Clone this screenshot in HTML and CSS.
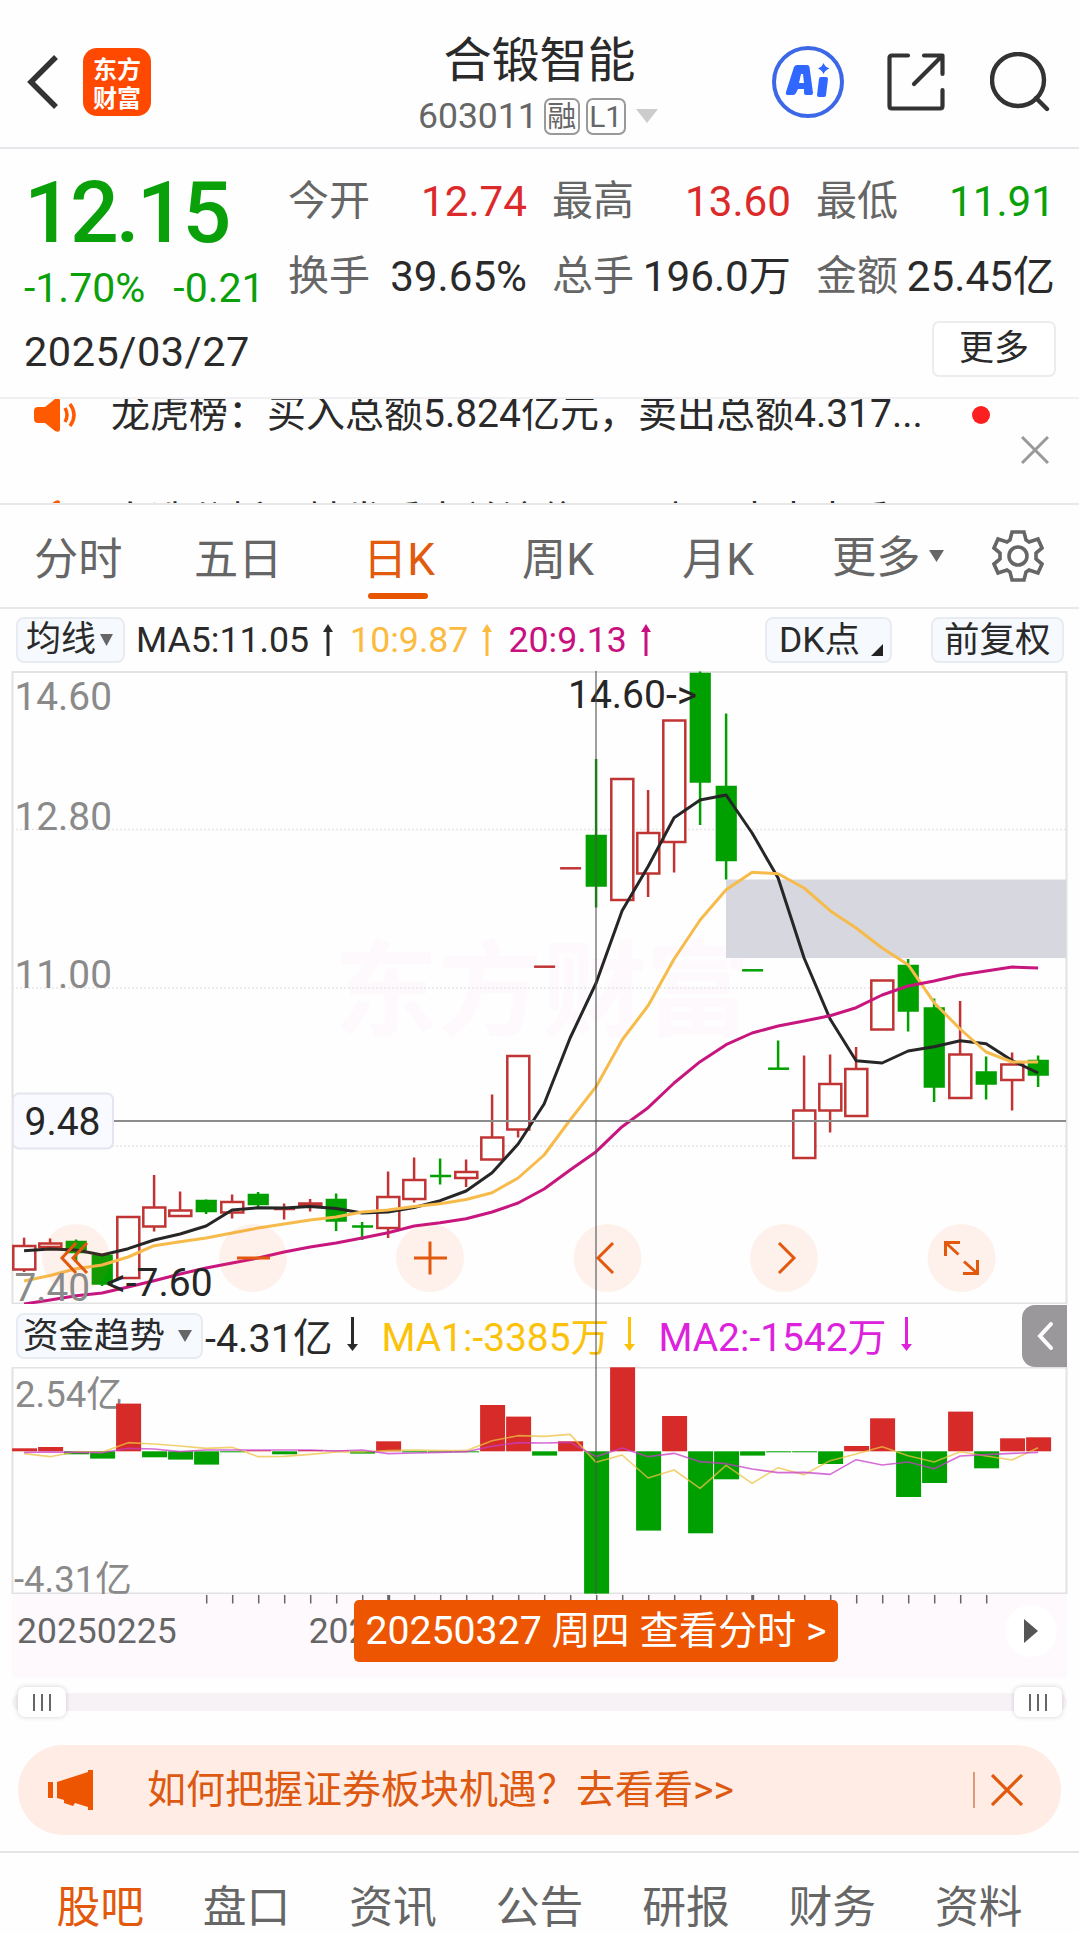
FILE: index.html
```html
<!DOCTYPE html>
<html lang="zh-CN">
<head>
    <meta charset="UTF-8">
    <meta name="viewport" content="width=device-width, initial-scale=1.0">
    <title>合锻智能 603011</title>
    <link rel="stylesheet" href="styles.css">
</head>
<body>
    <header class="header">
        <div class="header-left">
            <svg class="back" width="34" height="56" viewBox="0 0 34 56"><path d="M30 3 L5 28 L30 53" fill="none" stroke="#333" stroke-width="5.5"/></svg>
            <div class="logo"><span>东方</span><span>财富</span></div>
        </div>
        <div class="header-title">
            <h1>合锻智能</h1>
            <div class="code">
                <span>603011</span>
                <span class="tag tag-rong">融</span>
                <span class="tag">L1</span>
                <svg width="22" height="14" viewBox="0 0 22 14"><path d="M0 0H22L11 14Z" fill="#ccc"/></svg>
            </div>
        </div>
        <div class="header-right">
            <svg width="72" height="72" viewBox="0 0 72 72">
                <circle cx="36" cy="36" r="34" fill="none" stroke="#3c68e8" stroke-width="4"/>
                <path fill="#2f67ff" fill-rule="evenodd" d="M25 19H35Q37 19 37.500 21L41 47Q41 49 39 49H34Q32 49 32 47V43H26L24 47Q23 49 21 49H16Q13 49 14 46L22 21Q23 19 25 19ZM29 28L27 37H32L31 28ZM49 31H54Q56 31 56 33L54 49Q54 51 52 51H47Q45 51 45 49L47 33Q47 31 49 31ZM51.500 17Q53 21 57.500 22.500Q53 24 51.500 28Q50 24 46 22.500Q50 21 51.500 17Z"/>
            </svg>
            <svg width="58" height="58" viewBox="0 0 58 58" fill="none" stroke="#333" stroke-width="4.200" stroke-linecap="round" stroke-linejoin="round">
                <path d="M21 2.500H5Q2.500 2.500 2.500 5V53Q2.500 55.500 5 55.500H53Q55.500 55.500 55.500 53V37M37 2.500H55.500V21M54 4L27 31"/>
            </svg>
            <svg width="60" height="60" viewBox="0 0 60 60" fill="none" stroke="#333" stroke-width="4.400" stroke-linecap="round">
                <circle cx="28" cy="28" r="26"/><path d="M46 46L57 57"/>
            </svg>
        </div>
    </header>

    <section class="quote">
        <div class="quote-top">
            <div class="quote-price">
                <div class="price">12.15</div>
                <div class="change"><span>-1.70%</span><span>-0.21</span></div>
            </div>
            <div class="quote-grid">
                <div class="cell"><span class="label">今开</span><span class="red">12.74</span></div>
                <div class="cell"><span class="label">最高</span><span class="red">13.60</span></div>
                <div class="cell"><span class="label">最低</span><span class="green">11.91</span></div>
                <div class="cell"><span class="label">换手</span><span>39.65%</span></div>
                <div class="cell"><span class="label">总手</span><span>196.0万</span></div>
                <div class="cell"><span class="label">金额</span><span>25.45亿</span></div>
            </div>
        </div>
        <div class="quote-bottom">
            <span class="date">2025/03/27</span>
            <button class="more">更多</button>
        </div>
    </section>

    <section class="news">
        <div class="news-list">
            <div class="news-row">
                <svg width="44" height="34" viewBox="0 0 44 34"><path fill="#ff5a00" d="M0 13Q0 9 4 9H11L21 1Q26-1 26 3V31Q26 35 21 33L11 25H4Q0 25 0 21Z"/><path d="M31 10Q35 17 31 24M36 6Q44 17 36 28" fill="none" stroke="#ff5a00" stroke-width="3.500"/></svg>
                <span class="news-text">龙虎榜：买入总额5.824亿元，卖出总额4.317...</span>
                <i class="dot"></i>
            </div>
            <div class="news-row">
                <svg width="44" height="34" viewBox="0 0 44 34"><path fill="#ff5a00" d="M0 13Q0 9 4 9H11L21 1Q26-1 26 3V31Q26 35 21 33L11 25H4Q0 25 0 21Z"/></svg>
                <span class="news-text">自选分析：触发看大关注信号，立即去去去看</span>
            </div>
        </div>
        <svg class="news-close" width="28" height="28" viewBox="0 0 28 28"><path d="M1 1L27 27M27 1L1 27" stroke="#999" stroke-width="3"/></svg>
    </section>

    <nav class="tabs">
        <span>分时</span>
        <span>五日</span>
        <span class="active">日K</span>
        <span>周K</span>
        <span>月K</span>
        <span class="tab-more">更多<svg width="15" height="12" viewBox="0 0 15 12"><path d="M0 0H15L7.500 12Z" fill="#666"/></svg></span>
        <svg class="gear" width="52" height="52" viewBox="-26 -26 52 52" fill="none" stroke="#666" stroke-width="3.600">
            <path d="M-6-24H6L8-16L11-14L20-17L24-8L18-3V3L24 8L20 17L11 14L8 16L6 24H-6L-8 16L-11 14L-20 17L-24 8L-18 3V-3L-24-8L-20-17L-11-14L-8-16Z"/>
            <circle r="9"/>
        </svg>
    </nav>

    <div class="ma-bar">
        <button class="chip chip-ma">均线<svg width="13" height="12" viewBox="0 0 13 12"><path d="M0 0H13L6.500 12Z" fill="#666"/></svg></button>
        <span class="ma ma5">MA5:11.05<svg width="10" height="32" viewBox="0 0 10 32"><path d="M5 5V32" stroke="currentColor" stroke-width="3"/><path d="M5 0L10 8H0Z" fill="currentColor"/></svg></span>
        <span class="ma ma10">10:9.87<svg width="10" height="32" viewBox="0 0 10 32"><path d="M5 5V32" stroke="currentColor" stroke-width="3"/><path d="M5 0L10 8H0Z" fill="currentColor"/></svg></span>
        <span class="ma ma20">20:9.13<svg width="10" height="32" viewBox="0 0 10 32"><path d="M5 5V32" stroke="currentColor" stroke-width="3"/><path d="M5 0L10 8H0Z" fill="currentColor"/></svg></span>
        <button class="chip chip-dk">DK点<svg width="12" height="12" viewBox="0 0 12 12"><path d="M12 0V12H0Z" fill="#222"/></svg></button>
        <button class="chip chip-fq">前复权</button>
    </div>

    <div class="charts">
        <svg class="chart" id="kline" width="1079" height="633" viewBox="0 671 1079 633">
            <text class="watermark" x="334" y="1028">东方财富</text>
            <g class="grid">
                <path d="M12 829.500H1067M12 988H1067M12 1146H1067"/>
            </g>
            <rect class="frame" x="12.500" y="672" width="1054" height="631.500"/>
            <rect x="726" y="879.500" width="340" height="78.500" fill="#d6d7df"/>
            <g id="candles"></g>
            <g id="averages"></g>
            <g class="controls">
                <circle cx="76" cy="1258" r="34"/>
                <circle cx="253" cy="1258" r="34"/>
                <circle cx="430" cy="1258" r="34"/>
                <circle cx="607.500" cy="1258" r="34"/>
                <circle cx="784" cy="1258" r="34"/>
                <circle cx="961.500" cy="1258" r="34"/>
                <path d="M76 1243L62 1258L76 1273M87 1243L73 1258L87 1273M237 1258H270M414 1258H447M430 1241.500V1274.500M613 1243L598 1258L613 1273M779 1243L794 1258L779 1273"/>
                <path d="M958.500 1254.500L946 1243M945.500 1256V1242.500H960M964 1261.500L977 1273M977.500 1260V1273.500H963"/>
            </g>
            <path class="cross" d="M113 1121H1066"/>
            <g class="axis-text">
                <text x="14.500" y="709.500">14.60</text>
                <text x="14.500" y="829.500">12.80</text>
                <text x="14.500" y="987.500">11.00</text>
                <text x="14.500" y="1301">7.40</text>
            </g>
            <g class="mark-text">
                <text x="568" y="707.500">14.60-&gt;</text>
                <text x="106" y="1295.500">&lt;-7.60</text>
            </g>
            <rect class="price-tag" x="13" y="1093.500" width="100" height="55" rx="6"/>
            <text class="mark-text" x="24.500" y="1134.500">9.48</text>
        </svg>

        <div class="fund-bar">
            <button class="chip chip-fund">资金趋势<svg width="14" height="12" viewBox="0 0 14 12"><path d="M0 0H14L7 12Z" fill="#666"/></svg></button>
            <span class="fund fund-val">-4.31亿<svg width="11" height="34" viewBox="0 0 11 34"><path d="M5.500 0V30" stroke="currentColor" stroke-width="3"/><path d="M5.500 34L11 27H0Z" fill="currentColor"/></svg></span>
            <span class="fund fund-ma1">MA1:-3385万<svg width="11" height="34" viewBox="0 0 11 34"><path d="M5.500 0V30" stroke="currentColor" stroke-width="3"/><path d="M5.500 34L11 27H0Z" fill="currentColor"/></svg></span>
            <span class="fund fund-ma2">MA2:-1542万<svg width="11" height="34" viewBox="0 0 11 34"><path d="M5.500 0V30" stroke="currentColor" stroke-width="3"/><path d="M5.500 34L11 27H0Z" fill="currentColor"/></svg></span>
            <span class="side-tab"><svg width="18" height="30" viewBox="0 0 18 30"><path d="M15 3L4 15L15 27" fill="none" stroke="#fff" stroke-width="4" stroke-linecap="round"/></svg></span>
        </div>

        <svg class="chart" id="fund" width="1079" height="227" viewBox="0 1367 1079 227">
            <rect class="frame" x="12.500" y="1367.500" width="1054" height="226"/>
            <g class="axis-text">
                <text x="15" y="1407">2.54亿</text>
                <text x="14" y="1592">-4.31亿</text>
            </g>
            <g id="bars"></g>
            <g id="fundLines"></g>
        </svg>
        <div class="cross-v"></div>
    </div>

    <div class="time-axis">
        <svg class="ticks" id="ticks" width="1055" height="11" viewBox="12 0 1055 11"></svg>
        <div class="dates">
            <span class="date-start">20250225</span>
            <span class="date-mid">20250317</span>
            <span class="play"><svg width="14" height="24" viewBox="0 0 14 24"><path d="M0 0L14 12L0 24Z" fill="#555"/></svg></span>
        </div>
        <div class="tooltip">20250327 周四 查看分时 &gt;</div>
    </div>

    <div class="slider">
        <div class="handle"><i></i><i></i><i></i></div>
        <div class="handle"><i></i><i></i><i></i></div>
    </div>

    <div class="banner">
        <svg width="46" height="40" viewBox="0 0 46 40"><path fill="#ee5500" d="M0 12H5V28H0ZM9 12L40 2V0H45V40H40V37L27 33L25 36L16 33V30L9 28Z"/></svg>
        <span class="banner-text">如何把握证券板块机遇？去看看&gt;&gt;</span>
        <i class="divider"></i>
        <svg class="banner-close" width="32" height="32" viewBox="0 0 32 32"><path d="M1 1L31 31M31 1L1 31" stroke="#e2580c" stroke-width="3.200"/></svg>
    </div>

    <nav class="bottom-tabs">
        <span class="active">股吧</span>
        <span>盘口</span>
        <span>资讯</span>
        <span>公告</span>
        <span>研报</span>
        <span>财务</span>
        <span>资料</span>
    </nav>

    <script src="chart.js"></script>
</body>
</html>
```

FILE: styles.css
```css
* {
    box-sizing: border-box;
}
body {
    margin: 0;
    width: 1079px;
    height: 1933px;
    overflow: hidden;
    background: #fefefe;
    color: #2a2a2a;
    font-family: Roboto, "Noto Sans CJK SC", sans-serif;
}
svg {
    display: block;
    flex: none;
}
button {
    font-family: inherit;
    color: inherit;
    padding: 0;
    margin: 0;
}
.red {
    color: #dc2a2a;
}
.green {
    color: #0aa00a;
}

/* header */
.header {
    height: 149px;
    border-bottom: 2px solid #e6e6ea;
    display: grid;
    grid-template-columns: 340px 1fr 340px;
}
.header-left {
    display: flex;
    align-items: center;
    padding: 17px 0 0 26px;
}
.logo {
    width: 68px;
    height: 68px;
    margin-left: 23px;
    border-radius: 14px;
    background: #ff4800;
    color: #fff;
    font-family: "Noto Sans CJK SC", sans-serif;
    font-weight: 700;
    font-size: 24px;
    line-height: 29px;
    display: flex;
    flex-direction: column;
    align-items: center;
    justify-content: center;
}
.header-title {
    padding-top: 31px;
}
.header-title h1 {
    margin: 0;
    font-size: 48px;
    line-height: 60px;
    font-weight: 400;
    text-align: center;
}
.code {
    display: flex;
    align-items: center;
    height: 50px;
    padding-left: 78px;
    font-size: 35.500px;
    color: #666;
}
.tag {
    border: 2px solid #999;
    border-radius: 7px;
    height: 37px;
    width: 40px;
    margin-left: 6px;
    font-size: 30px;
    line-height: 34px;
    text-align: center;
}
.tag-rong {
    width: 36px;
    margin-left: 6px;
    font-size: 29px;
}
.code svg {
    margin-left: 10px;
}
.header-right {
    display: flex;
    align-items: center;
    padding: 17px 0 0 33px;
}
.header-right svg + svg {
    margin-left: 43px;
}
.header-right svg:last-child {
    margin-left: 45px;
}

/* quote */
.quote {
    height: 250px;
    border-bottom: 2px solid #f0f0f2;
}
.quote-top {
    display: flex;
    height: 165px;
}
.quote-price {
    width: 288px;
    padding-left: 24px;
    color: #0aa00a;
}
.price {
    margin-top: 19px;
    font-size: 86px;
    line-height: 90px;
    font-weight: 500;
    letter-spacing: -3px;
}
.change {
    display: flex;
    gap: 28px;
    margin-top: 6px;
    font-size: 41px;
    line-height: 48px;
}
.quote-grid {
    display: grid;
    grid-template-columns: 239px 239px 239px;
    grid-template-rows: 75px 75px;
    column-gap: 25px;
    padding-top: 15px;
}
.cell {
    display: flex;
    justify-content: space-between;
    font-size: 42.200px;
    line-height: 75px;
    white-space: nowrap;
}
.cell .label {
    font-size: 41px;
    color: #666;
}
.quote-bottom {
    display: flex;
    justify-content: space-between;
    align-items: center;
    height: 70px;
    padding: 0 23px 0 24px;
}
.date {
    font-size: 41.500px;
    letter-spacing: 0.5px;
    padding-top: 4px;
}
.more {
    width: 124px;
    height: 56px;
    border: 2px solid #ececee;
    border-radius: 7px;
    background: #fff;
    font-size: 35px;
    line-height: 52px;
}

/* news */
.news {
    position: relative;
    height: 106px;
    overflow: hidden;
    border-bottom: 2px solid #e8e8e8;
}
.news-list {
    margin-top: -37px;
}
.news-row {
    display: flex;
    align-items: center;
    height: 105px;
    padding-left: 34px;
    font-size: 39px;
    line-height: 105px;
}
.news-row + .news-row {
    margin-top: 2px;
}
.news-row + .news-row svg {
    margin-bottom: 10px;
}
.news-text {
    margin-left: 33px;
    width: 861px;
    white-space: nowrap;
}
.dot {
    width: 18px;
    height: 18px;
    border-radius: 50%;
    background: #fb1f1f;
}
.news-close {
    position: absolute;
    right: 30px;
    top: 37px;
}

/* period tabs */
.tabs {
    display: flex;
    align-items: center;
    height: 104px;
    border-bottom: 2px solid #e8e8e8;
    padding-left: 34px;
    font-size: 44.200px;
    line-height: 102px;
    color: #666;
    white-space: nowrap;
}
.tabs span {
    width: 160px;
    padding-top: 4px;
    height: 102px;
}
.tabs .active {
    position: relative;
    width: 168px;
    padding-left: 9px;
    color: #e25a0c;
}
.tabs .active::after {
    content: "";
    position: absolute;
    left: 14px;
    bottom: 8px;
    width: 60px;
    height: 6px;
    border-radius: 3px;
    background: #e85500;
}
.tabs .tab-more {
    display: flex;
    align-items: center;
    width: 160px;
    margin-left: -10px;
}
.tab-more svg {
    margin-left: 9px;
    margin-bottom: 4px;
}

/* moving average bar */
.ma-bar {
    display: flex;
    align-items: center;
    height: 62px;
    padding: 0 15px 0 16px;
    font-size: 35.700px;
    white-space: nowrap;
}
.chip {
    display: flex;
    align-items: center;
    height: 46px;
    border: 2px solid #e9ebf3;
    border-radius: 8px;
    background: #f6f9fe;
    font-size: 35px;
    line-height: 44px;
}
.chip-ma {
    width: 109px;
    padding-left: 8px;
}
.chip-ma svg {
    margin-left: 4px;
}
.chip-dk {
    width: 127px;
    margin-left: auto;
    padding-left: 12px;
    font-size: 35.500px;
}
.chip-dk svg {
    margin: 20px 0 0 11px;
}
.chip-fq {
    width: 133px;
    margin-left: 39px;
    padding-left: 11px;
    font-size: 35.500px;
}
.ma {
    display: flex;
    align-items: center;
}
.ma svg {
    margin-left: 14px;
}
.ma5 {
    margin-left: 11px;
}
.ma10 {
    margin-left: 17px;
    color: #fabb40;
}
.ma20 {
    margin-left: 16px;
    color: #c8107f;
}

/* charts */
.charts {
    position: relative;
}
.frame {
    fill: none;
    stroke: #e2e2e2;
    stroke-width: 2;
}
.grid path {
    stroke: #e6e6e6;
    stroke-width: 1.5;
    stroke-dasharray: 2 2;
}
.watermark {
    font-family: "Noto Sans CJK SC", sans-serif;
    font-size: 104px;
    font-weight: 700;
    fill: #fdf9fd;
}
.axis-text {
    font-size: 38.800px;
    fill: #8a8a8a;
}
#fund .axis-text {
    font-size: 36.500px;
}
.mark-text {
    font-size: 39px;
    fill: #262626;
}
.price-tag {
    fill: #f8faff;
    stroke: #e4e5ee;
    stroke-width: 2;
}
.cross {
    stroke: #8c8c8c;
    stroke-width: 2;
}
.cross-v {
    position: absolute;
    left: 595px;
    top: 0;
    width: 2px;
    height: 923px;
    background: rgba(80, 80, 80, 0.55);
}
.controls circle {
    fill: rgba(255, 90, 20, 0.08);
}
.controls path {
    fill: none;
    stroke: #e2580c;
    stroke-width: 3;
}
.up {
    fill: #fff;
    stroke: #c03434;
    stroke-width: 2.5;
}
.down {
    fill: #00a000;
    stroke: #00a000;
    stroke-width: 2.5;
}
.bar-up {
    fill: #d62b28;
}
.bar-down {
    fill: #00a000;
}
.line {
    fill: none;
    stroke-width: 3;
    stroke-linejoin: round;
}
.line.thin {
    stroke-width: 1.6;
    opacity: 0.75;
}

/* fund bar */
.fund-bar {
    display: flex;
    align-items: center;
    height: 63px;
    padding-left: 16px;
    font-size: 38.900px;
    white-space: nowrap;
}
.chip-fund {
    width: 187px;
    padding-left: 5px;
    font-size: 35.500px;
}
.chip-fund svg {
    margin-left: 13px;
}
.fund {
    display: flex;
    align-items: center;
    padding-bottom: 3px;
}
.fund svg {
    margin-left: 15px;
}
.fund-val {
    margin-left: 2px;
    font-size: 39.500px;
}
.fund-ma1 {
    margin-left: 23px;
    color: #fbc20c;
}
.fund-ma2 {
    margin-left: 23px;
    color: #dc22dc;
}
.side-tab {
    display: flex;
    align-items: center;
    justify-content: center;
    width: 45px;
    height: 62px;
    margin: 0 12px 0 auto;
    border-radius: 13px 0 0 13px;
    background: #9b989b;
}

/* time axis */
.time-axis {
    position: relative;
    height: 84px;
    margin: 0 12px;
    background: #fdf9fd;
}
.dates {
    display: flex;
    align-items: center;
    height: 52px;
    padding-left: 5px;
    font-size: 35.500px;
    line-height: 48px;
    color: #666;
}
.date-mid {
    margin-left: 132px;
}
.play {
    display: flex;
    align-items: center;
    justify-content: center;
    width: 52px;
    height: 52px;
    margin-left: auto;
    margin-right: 10px;
    border-radius: 50%;
    background: #fff;
}
.tooltip {
    position: absolute;
    left: 342px;
    top: 6px;
    width: 484px;
    height: 62px;
    border-radius: 5px;
    background: #ee5500;
    color: #fff;
    font-size: 39.200px;
    line-height: 63px;
    text-align: center;
    white-space: pre;
}

/* range slider */
.slider {
    display: flex;
    justify-content: space-between;
    align-items: center;
    height: 18px;
    margin: 15px 12px 0;
    padding: 0 5px 0 6px;
    border-radius: 9px;
    background: #f6f2f6;
}
.handle {
    display: flex;
    justify-content: center;
    align-items: center;
    gap: 6px;
    width: 48px;
    height: 30px;
    border-radius: 7px;
    background: #fff;
    box-shadow: 0 0 4px rgba(90, 60, 90, 0.25);
}
.handle i {
    width: 2px;
    height: 17px;
    background: #666;
}

/* banner */
.banner {
    display: flex;
    align-items: center;
    height: 90px;
    margin: 34px 18px 0;
    padding: 0 38px 0 30px;
    border-radius: 45px;
    background: #ffede5;
    color: #dd5810;
}
.banner-text {
    margin-left: 53px;
    font-size: 39px;
    line-height: 90px;
}
.divider {
    width: 2px;
    height: 36px;
    margin-left: auto;
    background: #d99a78;
}
.banner-close {
    margin-left: 16px;
}

/* bottom tabs */
.bottom-tabs {
    display: grid;
    grid-template-columns: repeat(7, 1fr);
    height: 82px;
    margin-top: 16px;
    padding: 0 27px;
    border-top: 2px solid #e4e4e4;
    font-size: 43.800px;
    line-height: 110px;
    text-align: center;
    color: #666;
}
.bottom-tabs .active {
    color: #e2580c;
}
```

FILE: chart.js
```js
const X0 = 24.1;
const STEP = 26;

// [direction, body top, body bottom, high, low]
const candles = [
    ["u", 1246, 1269.5, 1237.7, 1272], ["u", 1243.5, 1247, 1238.5, 1248.5], ["d", 1242, 1252, 1239.5, 1262],
    ["d", 1256, 1283.5, 1255, 1286], ["u", 1217, 1278, 1217, 1279], ["u", 1207.5, 1226.5, 1175, 1231.5],
    ["u", 1210.5, 1216, 1191.5, 1216], ["d", 1201, 1211, 1199.5, 1214], ["u", 1202, 1212.5, 1194.5, 1218.5],
    ["d", 1195, 1204, 1192, 1208], ["u", 1209, 1209, 1203.5, 1219.5], ["u", 1203.5, 1205, 1199, 1211.5],
    ["d", 1200, 1220.5, 1193.5, 1231], ["d", 1226.5, 1226.5, 1222, 1240], ["u", 1197, 1228, 1171.5, 1238],
    ["u", 1180, 1199, 1157.5, 1202.5], ["d", 1176, 1176, 1158.5, 1184.5], ["u", 1172, 1178, 1159.5, 1187],
    ["u", 1137.5, 1159.5, 1094.5, 1159.5], ["u", 1056, 1129.5, 1056, 1137.5], ["u", 966.7, 966.7, 966.7, 966.7],
    ["u", 868.3, 868.3, 868.3, 868.3], ["d", 836, 885.5, 759, 907.5], ["u", 779, 900, 779, 900],
    ["u", 833, 873.5, 790, 897], ["u", 720.5, 842, 720.5, 872.5], ["d", 674, 781.5, 671.5, 825],
    ["d", 787, 860, 713.5, 879.5], ["d", 970.3, 970.3, 970.3, 970.3], ["d", 1068.7, 1068.7, 1040.5, 1068.7],
    ["u", 1110.5, 1158, 1055.5, 1158], ["u", 1084, 1110.5, 1054.5, 1132.5], ["u", 1069, 1116, 1047, 1116],
    ["u", 980.5, 1029.5, 980.5, 1029.5], ["d", 966, 1010.5, 959, 1031.5], ["d", 1008.5, 1086.5, 998.5, 1102],
    ["u", 1054.5, 1098, 1001, 1098], ["d", 1072.5, 1083.5, 1056.5, 1099.5], ["u", 1064.5, 1080, 1052.5, 1110.5],
    ["d", 1061, 1074.5, 1055.5, 1087]
];

const ma5 = [1250.7, 1249, 1250, 1255, 1248.7, 1240, 1234, 1226, 1210, 1207.7, 1208, 1206.5, 1208.5, 1213, 1212, 1207.5, 1200.7, 1191, 1172.7, 1144, 1104, 1038, 983, 910.7, 866.5, 817.7, 800, 795, 833, 878, 958, 1019, 1060.7, 1063, 1051, 1046.7, 1040.7, 1043.7, 1060.5, 1073];
const ma10 = [1281, 1275.5, 1268.7, 1265, 1257, 1245.7, 1241.7, 1238, 1233, 1228, 1224, 1220, 1217, 1212, 1210, 1206.5, 1203.7, 1199.5, 1192.7, 1178, 1155, 1120, 1086.7, 1040, 1005.7, 959, 920, 889.7, 872.3, 873.7, 888, 910.7, 928, 948, 964.7, 1002.7, 1029, 1052, 1062, 1062];
const ma20 = [1304, 1300, 1295.7, 1293, 1287, 1280.7, 1274, 1268, 1263, 1258, 1252, 1247, 1243, 1238, 1232.7, 1226, 1222.7, 1218.7, 1212, 1203, 1189, 1170, 1151.7, 1126.7, 1107.7, 1083, 1061.7, 1044.7, 1033, 1026, 1021, 1015.7, 1007.7, 995, 986, 981, 975, 971, 967, 968];

// fund flow, positive is drawn above the zero line
const ZERO = 1451.3;
const flow = [3, 4.3, -3, -7.3, 47.7, -6, -8.3, -13.3, -1, 1, -3, 1.3, 0.7, -2.3, 10, -1, -1, -1, 46.3, 34.7, -4.3, 10, -142.3, 84, -79.3, 35.3, -82, -28, -4.3, -1, -1, -12.7, 5.3, 33, -45.7, -31.7, 39.7, -17, 13, 14];
const flow1 = [461, 470, 455, 457, 428, 432, 438, 445, 442, 470, 469, 463, 456, 456, 452, 450, 452, 452, 422, 407, 409, 403, 487, 465, 534, 510, 565, 496, 550, 503, 524, 482, 462, 440, 467, 486, 455, 468, 480, 443];
const flow2 = [457, 456, 457, 458, 445, 447, 455, 450, 450, 450, 450, 450, 453, 450, 461, 459, 457, 455, 439, 428, 429, 427, 470, 444, 470, 460, 485, 491, 507, 518, 517, 523, 479, 495, 486, 506, 468, 464, 460, 457];

function polyline(values, color, extra) {
    const points = values.map((y, i) => `${X0 + i * STEP},${y}`).join(" ");
    return `<polyline class="line ${extra || ""}" stroke="${color}" points="${points}"/>`;
}

document.getElementById("candles").innerHTML = candles.map(([dir, top, bottom, high, low], i) => {
    const x = X0 + i * STEP;
    const cls = dir === "u" ? "up" : "down";
    const wick = high < low ? `<path class="${cls}" d="M${x} ${high}V${low}"/>` : "";
    const body = bottom > top
        ? `<rect class="${cls}" x="${x - (dir === "u" ? 10.8 : 9.2)}" y="${top}" width="${dir === "u" ? 22 : 18.7}" height="${bottom - top}"/>`
        : `<path class="${cls}" d="M${x - 10} ${top}H${x + 11}"/>`;
    return wick + body;
}).join("");

document.getElementById("averages").innerHTML =
    polyline(ma5, "#262626") + polyline(ma10, "#f6bb4b") + polyline(ma20, "#c8167f");

document.getElementById("bars").innerHTML = flow.map((v, i) => {
    const x = X0 + i * STEP - 12;
    const y = v > 0 ? ZERO - v : ZERO;
    return `<rect class="${v > 0 ? "bar-up" : "bar-down"}" x="${x}" y="${y}" width="25" height="${Math.abs(v)}"/>`;
}).join("");

document.getElementById("fundLines").innerHTML =
    polyline(flow1.map(v => 1300 + v / 3), "#edc140", "thin") +
    polyline(flow2.map(v => 1300 + v / 3), "#c83cc8", "thin");

let ticks = "";
for (let i = 0; i < 31; i++) {
    const bold = i === 7 || i === 21;
    ticks += `<path d="M${206.7 + i * STEP} 1V9.500" stroke="#666" stroke-width="${bold ? 3 : 1.5}"/>`;
}
document.getElementById("ticks").innerHTML = ticks;
```
